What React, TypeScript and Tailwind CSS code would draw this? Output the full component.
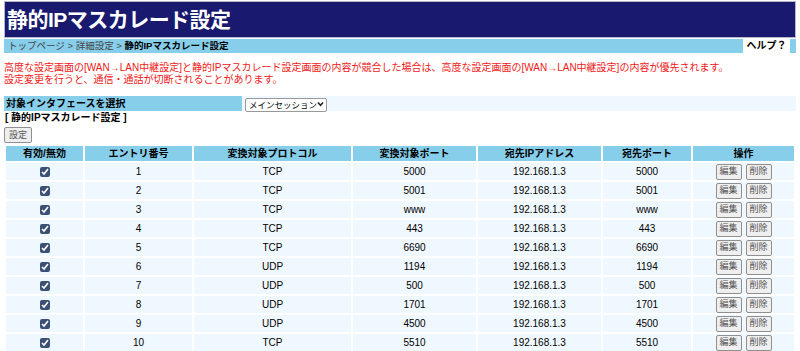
import React from 'react';

const rows = [
  { no: 1, proto: 'TCP', port: '5000', ip: '192.168.1.3', dport: '5000' },
  { no: 2, proto: 'TCP', port: '5001', ip: '192.168.1.3', dport: '5001' },
  { no: 3, proto: 'TCP', port: 'www', ip: '192.168.1.3', dport: 'www' },
  { no: 4, proto: 'TCP', port: '443', ip: '192.168.1.3', dport: '443' },
  { no: 5, proto: 'TCP', port: '6690', ip: '192.168.1.3', dport: '6690' },
  { no: 6, proto: 'UDP', port: '1194', ip: '192.168.1.3', dport: '1194' },
  { no: 7, proto: 'UDP', port: '500', ip: '192.168.1.3', dport: '500' },
  { no: 8, proto: 'UDP', port: '1701', ip: '192.168.1.3', dport: '1701' },
  { no: 9, proto: 'UDP', port: '4500', ip: '192.168.1.3', dport: '4500' },
  { no: 10, proto: 'TCP', port: '5510', ip: '192.168.1.3', dport: '5510' },
];

const SmallButton = ({ label }: { label: string }) => (
  <button className="h-[16px] w-[26px] rounded-[2px] border border-[#8f8f8f] bg-[#efefef] text-[9px] leading-none text-[#555]">
    {label}
  </button>
);

export default function App() {
  return (
    <div className="min-h-screen bg-white px-1 pt-px text-[10px] text-black [font-family:'Liberation_Sans','Noto_Sans_CJK_JP',sans-serif]">
      {/* title */}
      <div className="flex h-[37px] items-center border border-[#b8b8c8] bg-[#191970] pl-[2px]">
        <h1 className="text-[21px] font-bold tracking-tight text-white">静的IPマスカレード設定</h1>
      </div>

      {/* breadcrumb */}
      <div className="mt-px flex h-[14px] items-center bg-[#87ceeb] text-[9.5px] leading-none">
        <div className="flex-1 pl-[4px] text-[#444]">
          トップページ &gt; 詳細設定 &gt; <span className="font-bold text-black">静的IPマスカレード設定</span>
        </div>
        <div className="mr-[6px] flex h-full w-[47px] items-center justify-center bg-white text-[10px] font-bold">ヘルプ？</div>
      </div>

      {/* notice */}
      <div className="mt-[9px] text-[10px] leading-[12px] text-[#f01818]">
        <p>高度な設定画面の[WAN→LAN中継設定]と静的IPマスカレード設定画面の内容が競合した場合は、高度な設定画面の[WAN→LAN中継設定]の内容が優先されます。</p>
        <p>設定変更を行うと、通信・通話が切断されることがあります。</p>
      </div>

      {/* interface select */}
      <div className="mt-[10px] flex h-[15px] items-stretch">
        <div className="flex w-[238px] items-center bg-[#87ceeb] pl-[2px] font-bold">対象インタフェースを選択</div>
        <div className="flex flex-1 items-center bg-[#f0f8ff] pl-[3px]">
          <div className="relative h-[14px] w-[82px]">
            <select className="h-full w-full appearance-none rounded-[2px] border border-[#999] bg-white pl-[3px] text-[8.5px] leading-none">
              <option>メインセッション</option>
            </select>
            <svg className="pointer-events-none absolute right-[3px] top-[4px] h-[6px] w-[7px]" viewBox="0 0 7 6" fill="none" stroke="#222" strokeWidth="1.6">
              <path d="M1 1.5 L3.5 4.2 L6 1.5" />
            </svg>
          </div>
        </div>
      </div>

      <div className="pl-px font-bold leading-[14px]">[ 静的IPマスカレード設定 ]</div>

      <button className="mt-[2px] h-[16px] w-[28px] rounded-[2px] border border-[#8f8f8f] bg-[#efefef] text-[9px] leading-none text-[#555]">
        設定
      </button>

      <table className="mt-[1px] w-full border-separate border-spacing-[2px] text-center leading-[12px]">
        <thead>
          <tr className="h-[15px] bg-[#87ceeb] font-bold">
            <th className="w-[77px] p-0">有効/無効</th>
            <th className="w-[107px] p-0">エントリ番号</th>
            <th className="w-[157px] p-0">変換対象プロトコル</th>
            <th className="w-[123px] p-0">変換対象ポート</th>
            <th className="w-[123px] p-0">宛先IPアドレス</th>
            <th className="w-[88px] p-0">宛先ポート</th>
            <th className="p-0">操作</th>
          </tr>
        </thead>
        <tbody>
          {rows.map((r) => (
            <tr key={r.no} className="h-[17px] bg-[#f0f8ff]">
              <td className="p-0 align-middle">
                <input type="checkbox" defaultChecked className="m-0 h-[10px] w-[10px] align-middle accent-[#3a5175]" />
              </td>
              <td className="p-0">{r.no}</td>
              <td className="p-0">{r.proto}</td>
              <td className="p-0">{r.port}</td>
              <td className="p-0">{r.ip}</td>
              <td className="p-0">{r.dport}</td>
              <td className="p-0">
                <div className="flex justify-center gap-[4px]">
                  <SmallButton label="編集" />
                  <SmallButton label="削除" />
                </div>
              </td>
            </tr>
          ))}
        </tbody>
      </table>
    </div>
  );
}
